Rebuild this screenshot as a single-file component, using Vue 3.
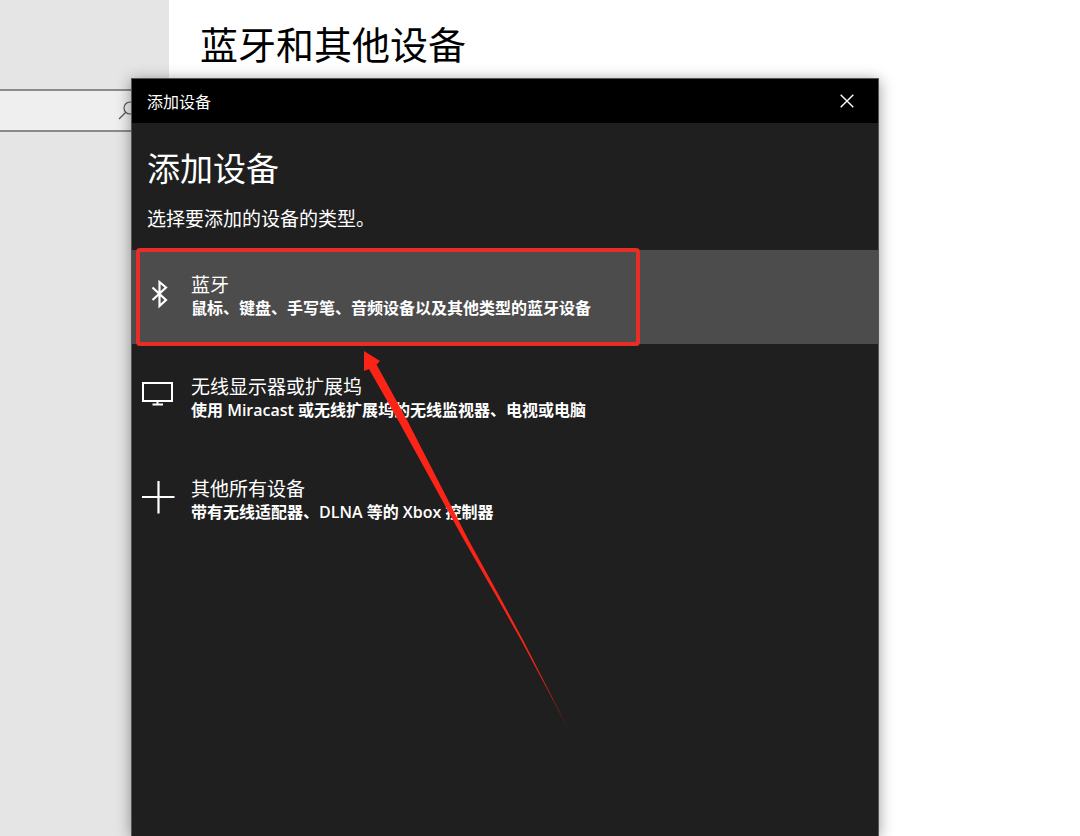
<script setup>
  import { ref } from 'vue'

  // search text in the settings sidebar
  const query = ref('')
  // selected device type
  const current = ref('bluetooth')
  // device types
  const types = [
    { id: 'bluetooth', name: '蓝牙', desc: '鼠标、键盘、手写笔、音频设备以及其他类型的蓝牙设备' },
    { id: 'display', name: '无线显示器或扩展坞', desc: '使用 Miracast 或无线扩展坞的无线监视器、电视或电脑' },
    { id: 'other', name: '其他所有设备', desc: '带有无线适配器、DLNA 等的 Xbox 控制器' }
  ]
  // whether the dialog is shown
  const open = ref(true)
</script>

<template>
  <div class="page">
    <!-- settings sidebar -->
    <aside class="sidebar">
      <label class="search">
        <input v-model="query" type="text" aria-label="查找设置">
        <svg width="20" height="20" viewBox="0 0 20 20">
          <circle cx="12" cy="7" r="6" stroke-width="1.2" />
          <path d="M7.5 11.5L1 18" stroke-width="1.2" />
        </svg>
      </label>
    </aside>
    <main class="content">
      <h1>蓝牙和其他设备</h1>
    </main>

    <!-- add device window -->
    <section v-if="open" class="dialog" role="dialog" aria-label="添加设备">
      <header class="titlebar">
        <span>添加设备</span>
        <button class="close" aria-label="关闭" @click="open = false">
          <svg width="14" height="14" viewBox="0 0 14 14">
            <path d="M0.7 0.7L13.3 13.3M13.3 0.7L0.7 13.3" stroke-width="1.4" />
          </svg>
        </button>
      </header>
      <div class="intro">
        <h2>添加设备</h2>
        <p>选择要添加的设备的类型。</p>
      </div>
      <div class="types">
        <button
          v-for="t in types"
          :key="t.id"
          class="type"
          :class="{ active: current == t.id }"
          @click="current = t.id"
        >
          <svg v-if="t.id == 'bluetooth'" class="icon" width="34" height="34" viewBox="0 0 34 34">
            <path d="M11.5 10.5L25 23L18.5 29V5L25 10.5L11.5 23" stroke-width="2.2" />
          </svg>
          <svg v-else-if="t.id == 'display'" class="icon" width="34" height="34" viewBox="0 0 34 34">
            <path d="M2 4H31V22H2ZM16.5 22V25.5M11.5 25.5H22" stroke-width="2" />
          </svg>
          <svg v-else class="icon" width="34" height="34" viewBox="0 0 34 34">
            <path d="M1 16H33.5M17.5 0V32.5" stroke-width="2.2" />
          </svg>
          <span class="label">
            <span class="name">{{t.name}}</span>
            <span class="desc">{{t.desc}}</span>
          </span>
        </button>
        <!-- marks the entry to pick -->
        <div class="frame"></div>
        <svg class="arrow" width="212" height="386" viewBox="0 0 212 386">
          <defs>
            <linearGradient id="fade" x1="0" y1="0" x2="0" y2="1">
              <stop offset="0.8" stop-color="#fc2317" />
              <stop offset="1" stop-color="#fc2317" stop-opacity="0.3" />
            </linearGradient>
          </defs>
          <path d="M1 0L17 10L13.5 13.5L44 69L105.5 189L138.5 249L160 289L209 385L158 289L135.5 249L101 189L35 69L6 18L1 20Z" fill="url(#fade)" />
        </svg>
      </div>
    </section>
  </div>
</template>

<style>
  body {
    margin: 0;
    background: white;
  }
</style>

<style scoped>
  * {
    box-sizing: border-box;
  }
  h1, h2, p {
    margin: 0;
    font-weight: 400;
  }
  button {
    padding: 0;
    border: 0;
    background: none;
    color: inherit;
    font: inherit;
    text-align: left;
  }
  svg {
    display: block;
    flex: none;
    fill: none;
    stroke: white;
  }

  .page {
    position: relative;
    display: flex;
    min-height: 100vh;
    overflow: hidden;
    font-family: "Open Sans", "Noto Sans CJK SC", sans-serif;
  }
  .sidebar {
    width: 169px;
    padding-top: 89px;
    background: #e5e5e5;
  }
  .search {
    display: flex;
    align-items: center;
    height: 43px;
    padding-right: 31px;
    border: solid #8a8a8a;
    border-width: 2px 0;
    background: #efefef;
  }
  .search input {
    flex: 1;
    min-width: 0;
    border: 0;
    outline: 0;
    background: none;
  }
  .search svg {
    stroke: #555;
  }
  .content {
    flex: 1;
    padding: 18px 31px;
  }
  h1 {
    font-size: 38px;
    line-height: 52px;
  }

  .dialog {
    position: absolute;
    inset: 78px 201px 0 131px;
    border: solid #555;
    border-width: 1px 1px 0;
    background: #1f1f1f;
    color: white;
    box-shadow: 0 2px 14px rgba(0, 0, 0, 0.4);
  }
  .titlebar {
    display: flex;
    align-items: center;
    justify-content: space-between;
    height: 44px;
    padding: 0 24px 0 15px;
    background: black;
    font-size: 16px;
  }
  .intro {
    padding: 22px 15px 17px;
  }
  h2 {
    font-size: 33px;
    line-height: 48px;
  }
  .intro p {
    margin-top: 12px;
    font-size: 19px;
    line-height: 28px;
  }

  .types {
    position: relative;
    display: flex;
    flex-direction: column;
    gap: 8px;
  }
  .type {
    display: flex;
    align-items: center;
    gap: 16px;
    height: 94px;
    padding: 0 9px 2px;
  }
  .active {
    background: #4c4c4c;
  }
  .icon {
    margin-bottom: 4px;
  }
  .label {
    display: flex;
    flex-direction: column;
  }
  .name {
    font-size: 19px;
    line-height: 24px;
  }
  .desc {
    font-size: 16px;
    font-weight: 600;
    line-height: 22px;
  }
  .frame {
    position: absolute;
    top: -2px;
    left: 4px;
    width: 504px;
    height: 98px;
    border: 4px solid #e72d25;
    border-radius: 4px;
    pointer-events: none;
  }
  .arrow {
    position: absolute;
    top: 101px;
    left: 231px;
    stroke: none;
    pointer-events: none;
  }
</style>
